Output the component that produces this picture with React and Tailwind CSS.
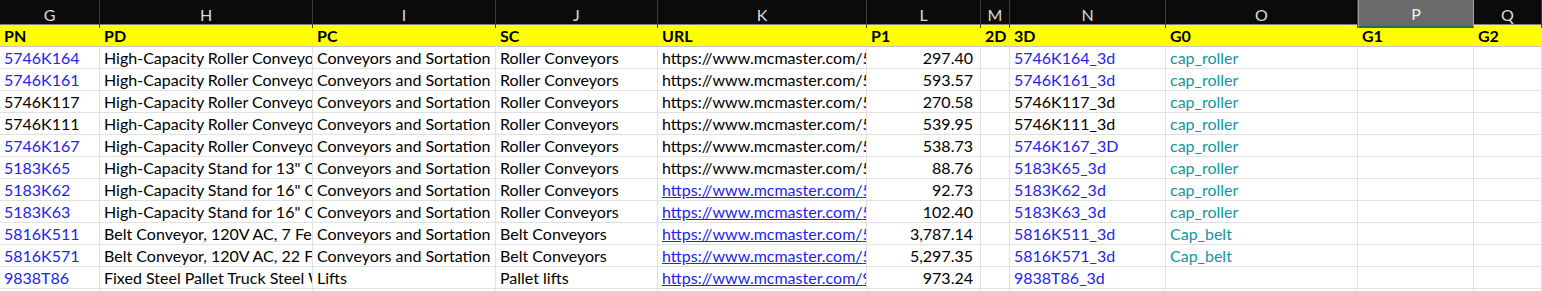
import React from "react";

const COLS = ["G", "H", "I", "J", "K", "L", "M", "N", "O", "P", "Q"];
const GRID = "grid grid-cols-[100px_213px_183px_162px_209px_114px_29px_156px_192px_116px_68px]";

const HEADERS = ["PN", "PD", "PC", "SC", "URL", "P1", "2D", "3D", "G0", "G1", "G2"];

const ROLLER = "High-Capacity Roller Conveyor with Frame, 24\" Wide";
const URL = "https://www.mcmaster.com/";

const rows = [
  { pn: "5746K164", pnBlue: true, pd: ROLLER, sc: "Roller Conveyors", link: false, p1: "297.40", d3: "5746K164_3d", g0: "cap_roller" },
  { pn: "5746K161", pnBlue: true, pd: ROLLER, sc: "Roller Conveyors", link: false, p1: "593.57", d3: "5746K161_3d", g0: "cap_roller" },
  { pn: "5746K117", pnBlue: false, pd: ROLLER, sc: "Roller Conveyors", link: false, p1: "270.58", d3: "5746K117_3d", g0: "cap_roller" },
  { pn: "5746K111", pnBlue: false, pd: ROLLER, sc: "Roller Conveyors", link: false, p1: "539.95", d3: "5746K111_3d", g0: "cap_roller" },
  { pn: "5746K167", pnBlue: true, pd: ROLLER, sc: "Roller Conveyors", link: false, p1: "538.73", d3: "5746K167_3D", g0: "cap_roller" },
  { pn: "5183K65", pnBlue: true, pd: "High-Capacity Stand for 13\" OAW Conveyor", sc: "Roller Conveyors", link: false, p1: "88.76", d3: "5183K65_3d", g0: "cap_roller" },
  { pn: "5183K62", pnBlue: true, pd: "High-Capacity Stand for 16\" OAW Conveyor", sc: "Roller Conveyors", link: true, p1: "92.73", d3: "5183K62_3d", g0: "cap_roller" },
  { pn: "5183K63", pnBlue: true, pd: "High-Capacity Stand for 16\" OAW Conveyor", sc: "Roller Conveyors", link: true, p1: "102.40", d3: "5183K63_3d", g0: "cap_roller" },
  { pn: "5816K511", pnBlue: true, pd: "Belt Conveyor, 120V AC, 7 Feet Long", sc: "Belt Conveyors", link: true, p1: "3,787.14", d3: "5816K511_3d", g0: "Cap_belt" },
  { pn: "5816K571", pnBlue: true, pd: "Belt Conveyor, 120V AC, 22 Feet Long", sc: "Belt Conveyors", link: true, p1: "5,297.35", d3: "5816K571_3d", g0: "Cap_belt" },
  { pn: "9838T86", pnBlue: true, pd: "Fixed Steel Pallet Truck Steel Wheels", pc: "Lifts", sc: "Pallet lifts", link: true, p1: "973.24", d3: "9838T86_3d", g0: "" },
];

const Cell = ({ className = "", children }) => (
  <div
    className={`flex h-[22px] items-center overflow-hidden whitespace-nowrap border-r border-b border-[#e1e1e1] px-[4px] pt-[1px] ${className}`}
  >
    {children}
  </div>
);

export default function App() {
  return (
    <div className="h-[291px] w-[1542px] overflow-hidden bg-white font-[Lato,sans-serif] text-[16px] text-black">
      {/* column letters */}
      <div className={`${GRID} h-[25px] border-b border-[#808080] bg-[#0b0b0b]`}>
        {COLS.map((col) =>
          col === "P" ? (
            <div
              key={col}
              className="flex items-center justify-center border-x border-b-2 border-x-[#a6a6a6] border-b-[#217346] bg-[#6a6a6a] pt-[2px] text-[#f2f2f2]"
            >
              {col}
            </div>
          ) : (
            <div
              key={col}
              className="flex items-center justify-center border-r border-[#3c3c3c] pt-[2px] text-[#dcdcdc]"
            >
              {col}
            </div>
          )
        )}
      </div>

      {/* field names */}
      <div className={`${GRID} h-[22px] border-b border-[#c6c6c6] bg-[#ffff00]`}>
        {HEADERS.map((h) => (
          <div key={h} className="flex items-center overflow-hidden whitespace-nowrap px-[4px] pt-[1px] font-bold">
            {h}
          </div>
        ))}
      </div>

      {rows.map((r) => (
        <div key={r.pn} className={GRID}>
          <Cell className={r.pnBlue ? "text-[#2323ee]" : ""}>{r.pn}</Cell>
          <Cell>{r.pd}</Cell>
          <Cell>{r.pc || "Conveyors and Sortation"}</Cell>
          <Cell>{r.sc}</Cell>
          <Cell className={r.link ? "text-[#2323ee] underline" : ""}>
            {URL}
            {r.pn}/
          </Cell>
          <Cell className="justify-end pr-[7px]">{r.p1}</Cell>
          <Cell />
          <Cell className={r.pnBlue ? "text-[#2323ee]" : ""}>{r.d3}</Cell>
          <Cell className="text-[#11979c]">{r.g0}</Cell>
          <Cell />
          <Cell />
        </div>
      ))}

      <div className={GRID}>
        {COLS.map((c) => (
          <Cell key={c} />
        ))}
      </div>
    </div>
  );
}
